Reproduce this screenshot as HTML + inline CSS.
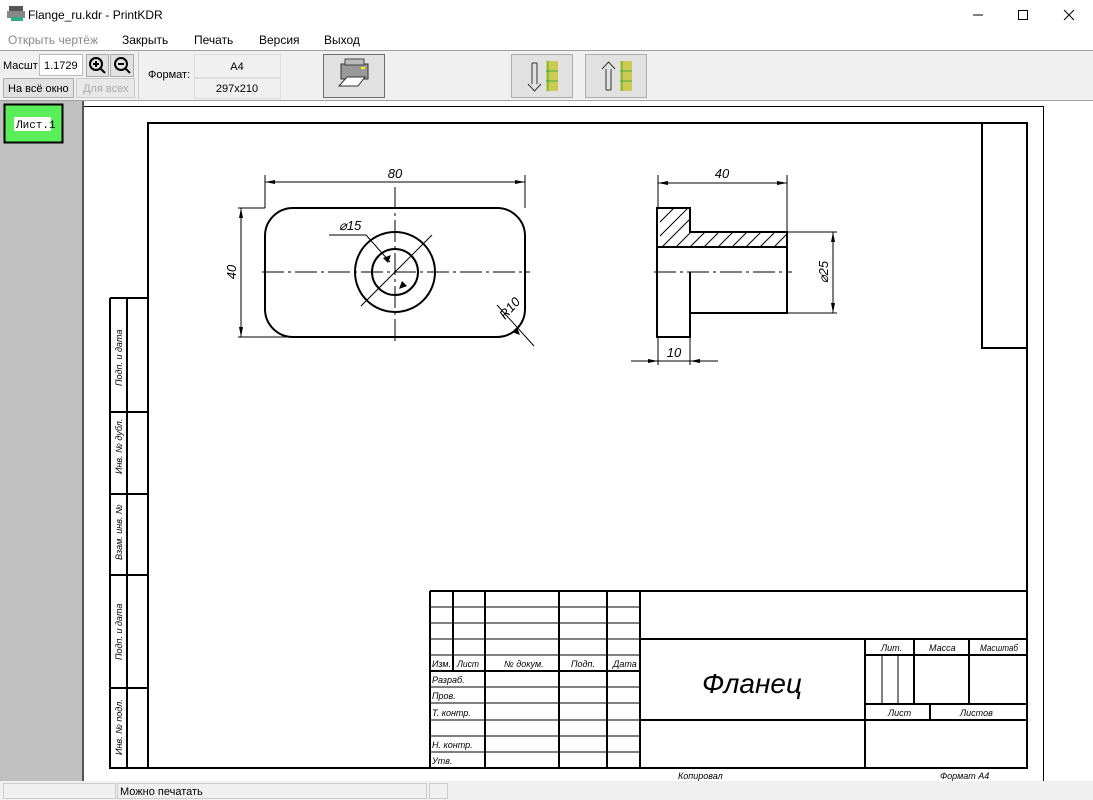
<!DOCTYPE html>
<html><head><meta charset="utf-8"><style>
body{margin:0;width:1093px;height:800px;overflow:hidden;background:#fff;font-family:"Liberation Sans",sans-serif;font-size:12px;position:relative}
.a{position:absolute}
</style></head><body>
<svg class="a" style="left:0;top:0" width="1093" height="800" xmlns="http://www.w3.org/2000/svg" font-family="Liberation Sans, sans-serif">
<rect x="0" y="0" width="1093" height="50" fill="#fff"/>
<rect x="9" y="6" width="14" height="6" fill="#555"/><rect x="7" y="11" width="18" height="7" fill="#888"/><rect x="11" y="17" width="12" height="4" fill="#3a8"/>
<text x="28" y="19" font-size="12" fill="#000">Flange_ru.kdr - PrintKDR</text>
<line x1="973" y1="15" x2="983" y2="15" stroke="#000"/>
<rect x="1018.5" y="10.5" width="9" height="9" fill="none" stroke="#000"/>
<path d="M1064 10 L1074 20 M1074 10 L1064 20" stroke="#000"/>
<text x="8" y="44" font-size="12" fill="#888">Открыть чертёж</text>
<text x="122" y="44" font-size="12">Закрыть</text>
<text x="194" y="44" font-size="12">Печать</text>
<text x="259" y="44" font-size="12">Версия</text>
<text x="324" y="44" font-size="12">Выход</text>
<rect x="0" y="50" width="1093" height="51" fill="#f0f0f0"/>
<line x1="0" y1="50.5" x2="1093" y2="50.5" stroke="#a0a0a0"/>
<line x1="0" y1="100.5" x2="1093" y2="100.5" stroke="#a0a0a0"/>
<line x1="138.5" y1="52" x2="138.5" y2="99" stroke="#ccc"/>
<text x="3" y="69" font-size="11">Масшт</text>
<rect x="39.5" y="54.5" width="43" height="21" fill="#fff" stroke="#bbb"/>
<text x="44" y="69" font-size="11">1.1729</text>
<rect x="86.5" y="54.5" width="22" height="22" fill="#e1e1e1" stroke="#adadad"/>
<circle cx="96" cy="64" r="6" fill="none" stroke="#000" stroke-width="2"/><path d="M100 68 L105 73 M93 64 H99 M96 61 V67" stroke="#000" stroke-width="2"/>
<rect x="110.5" y="54.5" width="23" height="22" fill="#e1e1e1" stroke="#adadad"/>
<circle cx="121" cy="64" r="6" fill="none" stroke="#000" stroke-width="2"/><path d="M125 68 L130 73 M118 64 H124" stroke="#000" stroke-width="2"/>
<rect x="3.5" y="78.5" width="70" height="19" fill="#e1e1e1" stroke="#adadad"/>
<text x="8" y="92" font-size="11">На всё окно</text>
<rect x="76.5" y="78.5" width="58" height="19" fill="#e8e8e8" stroke="#ccc"/>
<text x="83" y="92" font-size="11" fill="#aaa">Для всех</text>
<text x="148" y="78" font-size="11">Формат:</text>
<rect x="194.5" y="54.5" width="86" height="23" fill="#f0f0f0" stroke="#ddd"/>
<text x="237" y="70" font-size="11" text-anchor="middle">A4</text>
<rect x="194.5" y="78.5" width="86" height="20" fill="#f0f0f0" stroke="#ddd"/>
<text x="237" y="92" font-size="11" text-anchor="middle">297x210</text>
<rect x="323.5" y="54.5" width="61" height="43" fill="#e1e1e1" stroke="#707070"/>
<rect x="341" y="64" width="27" height="15" fill="#999" stroke="#333"/><rect x="345" y="59" width="19" height="6" fill="#bbb" stroke="#444"/><rect x="361" y="67" width="4" height="2" fill="#ff0"/><path d="M339 86 L347 77 H365 L358 86 Z" fill="#fff" stroke="#333"/>
<rect x="511.5" y="54.5" width="61" height="43" fill="#e1e1e1" stroke="#adadad"/>
<path d="M532 63 V84 M537 63 V84 M532 63 H537 M528 84 L534.5 91 L541 84" fill="none" stroke="#333"/>
<rect x="546" y="61" width="12" height="30" fill="#cc5"/><path d="M546 71 H558 M546 81 H558 M548 61 V91" stroke="#4a4"/>
<rect x="585.5" y="54.5" width="61" height="43" fill="#e1e1e1" stroke="#adadad"/>
<path d="M606 69 V90 M611 69 V90 M606 90 H611 M602 69 L608.5 62 L615 69" fill="none" stroke="#333"/>
<rect x="620" y="61" width="12" height="30" fill="#cc5"/><path d="M620 71 H632 M620 81 H632 M622 61 V91" stroke="#4a4"/>
<rect x="0" y="101" width="82" height="680" fill="#c0c0c0"/>
<rect x="82" y="101" width="2" height="680" fill="#555"/>
<rect x="4.5" y="104.5" width="58" height="38" fill="#5aef5a" stroke="#000" stroke-width="2"/>
<rect x="14" y="117" width="37" height="14" fill="#fff"/>
<text x="16" y="128" font-size="11" font-family="Liberation Mono, monospace">Лист.1</text>
<line x1="84" y1="106.5" x2="1043" y2="106.5" stroke="#000"/>
<line x1="1043.5" y1="106" x2="1043.5" y2="781" stroke="#000"/>
<g stroke="#000" fill="none" stroke-width="2">
<path d="M148 123 H1027 V768 H148 Z"/>
<path d="M982 123 V348 H1027"/>
<path d="M110 298 H148 M110 298 V768 H148 M127 298 V768 M110 412 H148 M110 494 H148 M110 575 H148 M110 688 H148"/>
<path d="M430 591 H1027 M430 591 V768 M453 591 V671 M485 591 V768 M559 591 V768 M607 591 V768 M640 591 V768"/>
<path d="M640 639 H1027 M640 720 H1027 M865 639 V768 M865 655 H1027 M914 639 V704 M969 639 V704 M865 704 H1027 M930 704 V720"/>
<path d="M430 671 H640"/>
</g>
<g stroke="#000" stroke-width="1">
<path d="M430 607 H640 M430 623 H640 M430 639 H640 M430 655 H640 M430 687 H640 M430 703 H640 M430 720 H640 M430 736 H640 M430 752 H640 M882 655 V704 M898 655 V704"/>
</g>
<g font-style="italic" font-size="9" font-family="Liberation Sans Narrow, Liberation Sans, sans-serif">
<text x="432" y="667" textLength="19" lengthAdjust="spacingAndGlyphs">Изм.</text><text x="457" y="667" textLength="22" lengthAdjust="spacingAndGlyphs">Лист</text><text x="504" y="667">№ докум.</text><text x="571" y="667">Подп.</text><text x="613" y="667">Дата</text>
<text x="432" y="683">Разраб.</text><text x="432" y="699">Пров.</text><text x="432" y="716">Т. контр.</text><text x="432" y="748">Н. контр.</text><text x="432" y="764">Утв.</text>
<text x="881" y="651">Лит.</text><text x="929" y="651">Масса</text><text x="980" y="651" textLength="38" lengthAdjust="spacingAndGlyphs">Масштаб</text>
<text x="888" y="716">Лист</text><text x="960" y="716">Листов</text>
<text x="678" y="779">Копировал</text><text x="940" y="779">Формат А4</text>
<text transform="translate(122,386) rotate(-90)">Подп. и дата</text>
<text transform="translate(122,474) rotate(-90)">Инв. № дубл.</text>
<text transform="translate(122,560) rotate(-90)">Взам. инв. №</text>
<text transform="translate(122,660) rotate(-90)">Подп. и дата</text>
<text transform="translate(122,755) rotate(-90)">Инв. № подл.</text>
</g>
<text x="752" y="693" font-size="28" font-style="italic" text-anchor="middle" font-family="Liberation Sans Narrow, Liberation Sans, sans-serif">Фланец</text>
<g fill="none" stroke="#000">
<rect x="265" y="208" width="260" height="129" rx="28" stroke-width="2"/>
<circle cx="395" cy="272" r="40" stroke-width="2"/>
<circle cx="395" cy="272" r="23" stroke-width="2"/>
<path d="M262 272 H530 M395 187 V345" stroke-dasharray="22 4 3 4"/>
<path d="M265 175 V208 M525 175 V208 M265 182 H525 M238 208 H265 M238 337 H290 M241 208 V337"/>
<path d="M329 235 H366 L390 262 M361 306 L432 235 M497 305 L534 346"/>
<path d="M657 208 H690 V232 H787 V313 H690 V337 H657 Z M657 247 H787 M690 272 V337" stroke-width="2"/>
<path d="M654 272 H792" stroke-dasharray="22 4 3 4"/>
<path d="M658 175 V208 M787 175 V232 M658 183 H787 M787 232 H837 M787 313 H837 M833 232 V313 M658 337 V365 M690 337 V365 M631 361 H718"/>
<path d="M660 222 L674 208 M660 236 L688 208 M662 247 L690 219 M676 247 L690 233 M690 247 L705 232 M704 247 L719 232 M718 247 L733 232 M732 247 L747 232 M746 247 L761 232 M760 247 L775 232 M774 247 L787 234"/>
</g>
<g fill="#000">
<path d="M265 182 l10 -2 v4z M525 182 l-10 -2 v4z M241 208 l-2 10 h4z M241 337 l-2 -10 h4z M658 183 l10 -2 v4z M787 183 l-10 -2 v4z M833 232 l-2 10 h4z M833 313 l-2 -10 h4z M658 361 l-10 -2 v4z M690 361 l10 -2 v4z M383 258 l8 -3 l-3 8z M407 286 l-8 3 l3 -8z M517 327 l3 8 l-8 -3z"/>
</g>
<g font-style="italic" font-size="13" font-family="Liberation Sans Narrow, Liberation Sans, sans-serif">
<text x="395" y="178" text-anchor="middle">80</text>
<text transform="translate(236,272) rotate(-90)" text-anchor="middle">40</text>
<text x="339" y="230">⌀15</text>
<text transform="translate(505,320) rotate(-48)">R10</text>
<text x="722" y="178" text-anchor="middle">40</text>
<text transform="translate(828,272) rotate(-90)" text-anchor="middle">⌀25</text>
<text x="674" y="357" text-anchor="middle">10</text>
</g>
<rect x="0" y="781" width="1093" height="19" fill="#f0f0f0"/>
<rect x="3.5" y="783.5" width="112" height="15" fill="none" stroke="#ccc"/>
<rect x="117.5" y="783.5" width="309" height="15" fill="none" stroke="#ccc"/>
<rect x="429.5" y="783.5" width="18" height="15" fill="none" stroke="#ccc"/>
<text x="120" y="795" font-size="11">Можно печатать</text>
</svg>
</body></html>
